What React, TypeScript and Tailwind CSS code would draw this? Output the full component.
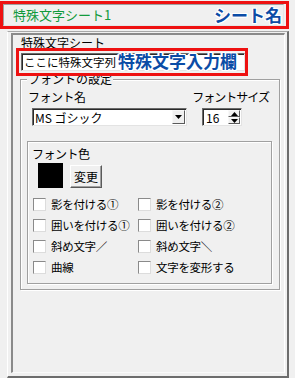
import React from "react";

function Check({ label }: { label: string }) {
  return (
    <div className="flex items-center h-[13px]">
      <div className="w-[13px] h-[13px] shrink-0 bg-white border border-t-[#8a8a8a] border-l-[#8a8a8a] border-r-[#dcdcdc] border-b-[#dcdcdc]" />
      <span className="ml-[5px] text-[11.5px] leading-[13px] whitespace-nowrap tracking-[-0.3px]">{label}</span>
    </div>
  );
}

export default function App() {
  return (
    <div className="w-[295px] h-[378px] bg-[#f0f0f0] overflow-hidden text-black font-['Noto_Sans_CJK_JP','Noto_Sans_CJK_SC',sans-serif]">
      {/* sheet name */}
      <div className="mt-[1px] w-[289px] h-[28px] border-[3px] border-[#ee1111] bg-[#f0f0f0] pr-[2px]">
        <div className="h-full border border-t-[#a0a0a0] border-l-[#a0a0a0] border-r-[#e6e6e6] border-b-[#e6e6e6] flex items-center justify-between pl-[9px] pr-[1px]">
          <span className="text-[13px] leading-[16px] text-[#129a3c]">特殊文字シート1</span>
          <span className="text-[17px] leading-[20px] font-bold text-[#0b4ca6] [text-shadow:1px_0_0_#fff,-1px_0_0_#fff,0_1px_0_#fff,0_-1px_0_#fff,1px_1px_0_#fff,-1px_-1px_0_#fff,1px_-1px_0_#fff,-1px_1px_0_#fff]">
            シート名
          </span>
        </div>
      </div>

      {/* outer panel */}
      <div className="mt-[2px] ml-[7px] w-[282px] h-[347px] border-t border-l border-t-[#a8a8a8] border-l-white border-r-2 border-b-2 border-r-[#6d6d6d] border-b-[#6d6d6d] pl-[3px] pt-[1px] pr-[2px] pb-[3px]">
        <div className="h-full border-t-2 border-l-2 border-r border-b border-t-[#8a8a8a] border-l-[#8a8a8a] border-r-white border-b-[#fafafa]">
          <div className="ml-[8px] mt-[1px] text-[12px] leading-[14px] h-[14px]">特殊文字シート</div>

          {/* input annotation */}
          <div className="relative z-10 -mt-[2px] ml-[3px] w-[232px] h-[28px] border-[3px] border-[#ee1111] bg-[#f0f0f0] pl-[2px] pt-[2px]">
            <div className="w-[224px] h-[18px] bg-white border border-t-[#6a6a6a] border-l-[#6a6a6a] border-r-[#e3e3e3] border-b-[#e3e3e3] [box-shadow:inset_1px_1px_0_#2a2a2a] pl-[2px] text-[11.5px] leading-[16px] whitespace-nowrap">
              ここに特殊文字列
            </div>
            <span className="absolute left-[99px] top-[0px] text-[17px] leading-[20px] font-bold text-[#0b4ca6] whitespace-nowrap [text-shadow:1px_0_0_#fff,-1px_0_0_#fff,0_1px_0_#fff,0_-1px_0_#fff,1px_1px_0_#fff,-1px_-1px_0_#fff,1px_-1px_0_#fff,-1px_1px_0_#fff,2px_0_0_#fff,-2px_0_0_#fff]">
              特殊文字入力欄
            </span>
          </div>

          {/* font settings group */}
          <div className="relative mt-[3px] ml-[7px] w-[260px] h-[211px] border border-[#a0a0a0] [box-shadow:inset_1px_1px_0_#fff,1px_1px_0_#fff]">
            <span className="absolute -top-[8px] left-[6px] px-[1px] bg-[#f0f0f0] text-[12px] leading-[14px]">フォントの設定</span>
            <div className="flex justify-between pl-[7px] pr-[10px] mt-[10px] text-[12px] leading-[14px]">
              <span className="tracking-[-0.5px]">フォント名</span>
              <span className="tracking-[-1px]">フォントサイズ</span>
            </div>
            <div className="flex mt-[4px] ml-[11px] items-start">
              {/* select */}
              <div className="w-[155px] h-[18px] bg-white border border-t-[#6a6a6a] border-l-[#6a6a6a] border-r-[#e3e3e3] border-b-[#e3e3e3] [box-shadow:inset_1px_1px_0_#2a2a2a] flex items-center">
                <span className="pl-[2px] pt-[1px] flex-1 text-[12px] leading-[14px] whitespace-nowrap">MS ゴシック</span>
                <div className="w-[13px] h-[14px] mr-[1px] bg-[#f0f0f0] border border-t-[#f8f8f8] border-l-[#f8f8f8] border-r-[#5a5a5a] border-b-[#5a5a5a] flex items-center justify-center">
                  <svg width="7" height="4" viewBox="0 0 7 4"><path d="M0 0H7L3.5 4Z" fill="#000" /></svg>
                </div>
              </div>
              {/* spin */}
              <div className="ml-[15px] w-[40px] h-[18px] bg-white border border-t-[#6a6a6a] border-l-[#6a6a6a] border-r-[#e3e3e3] border-b-[#e3e3e3] [box-shadow:inset_1px_1px_0_#2a2a2a] flex items-center">
                <span className="pl-[3px] pt-[1px] flex-1 text-[12px] leading-[14px]">16</span>
                <div className="w-[12px] h-[14px] mr-[1px] flex flex-col">
                  <div className="h-[7px] bg-[#f0f0f0] border border-t-[#f8f8f8] border-l-[#f8f8f8] border-r-[#5a5a5a] border-b-[#5a5a5a] flex items-center justify-center">
                    <svg width="7" height="4" viewBox="0 0 7 4"><path d="M0 4H7L3.5 0Z" fill="#000" /></svg>
                  </div>
                  <div className="h-[7px] bg-[#f0f0f0] border border-t-[#f8f8f8] border-l-[#f8f8f8] border-r-[#5a5a5a] border-b-[#5a5a5a] flex items-center justify-center">
                    <svg width="7" height="4" viewBox="0 0 7 4"><path d="M0 0H7L3.5 4Z" fill="#000" /></svg>
                  </div>
                </div>
              </div>
            </div>

            {/* font color group */}
            <div className="mt-[15px] ml-[6px] w-[245px] h-[143px] border border-[#a0a0a0] [box-shadow:inset_1px_1px_0_#fff,1px_1px_0_#fff] pl-[4px] pt-[5px]">
              <div className="text-[12px] leading-[14px] tracking-[-0.5px]">フォント色</div>
              <div className="flex items-end mt-[2px] ml-[6px]">
                <div className="w-[25px] h-[25px] bg-black" />
                <div className="ml-[7px] w-[32px] h-[23px] bg-[#f0f0f0] border border-t-white border-l-white border-r-[#5a5a5a] border-b-[#5a5a5a] [box-shadow:inset_-1px_-1px_0_#a0a0a0] flex items-center justify-center text-[12px] leading-[14px]">
                  変更
                </div>
              </div>
              <div className="mt-[10px] ml-[1px] grid grid-cols-[105px_1fr] gap-y-[8px]">
                <Check label="影を付ける①" />
                <Check label="影を付ける②" />
                <Check label="囲いを付ける①" />
                <Check label="囲いを付ける②" />
                <Check label="斜め文字／" />
                <Check label="斜め文字＼" />
                <Check label="曲線" />
                <Check label="文字を変形する" />
              </div>
            </div>
          </div>
        </div>
      </div>
    </div>
  );
}
